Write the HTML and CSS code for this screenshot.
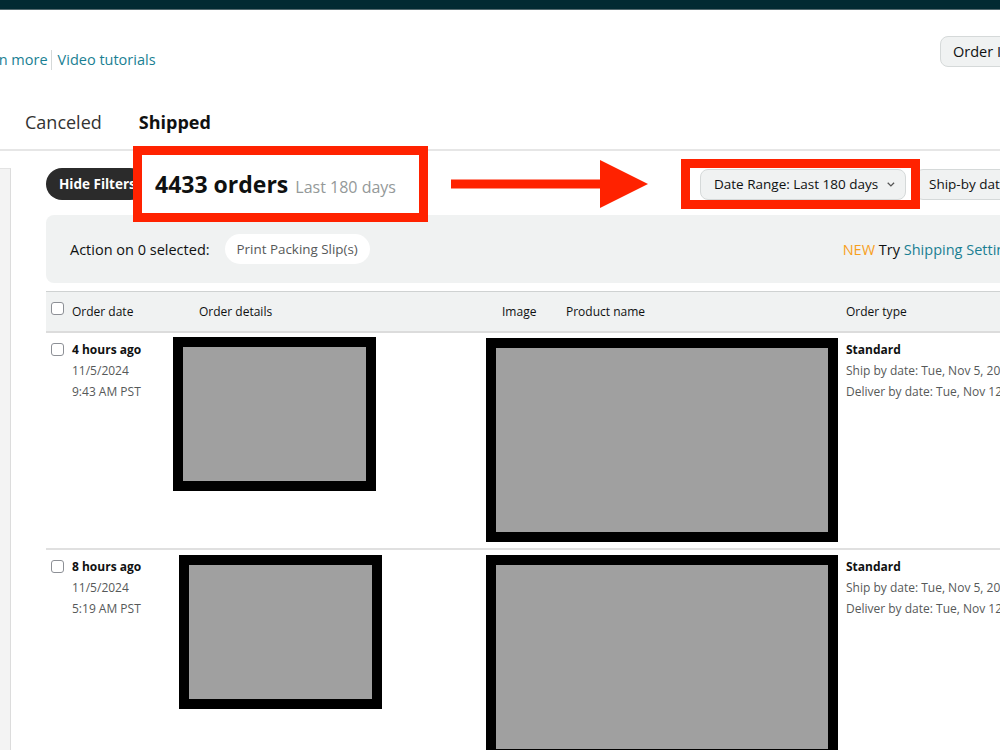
FILE: index.html
```html
<!DOCTYPE html>
<html>

	<head>
		<meta charset="UTF-8">
		<title>Manage Orders - Shipped</title>
		<link rel="stylesheet" href="styles.css">
	</head>

	<body>
		<div class="topbar"></div>

		<div class="subhead">
			<div class="links">
				<a class="link">Learn more</a>
				<a class="link sep">Video tutorials</a>
			</div>
			<div class="search-type">Order ID</div>
		</div>

		<div class="tabs">
			<div class="tab">Canceled</div>
			<div class="tab active">Shipped</div>
		</div>

		<div class="main">
			<div class="sidebar"></div>
			<div class="content">

				<div class="toolbar">
					<div class="pill-dark">Hide Filters</div>
					<div class="mark count">
						<p><b>4433 orders</b><span class="range">Last 180 days</span></p>
					</div>
					<svg class="arrow" width="197" height="48" viewBox="0 0 197 48">
						<rect x="0" y="19.5" width="150" height="9" fill="#ff2200"/>
						<polygon points="149,0 197,24 149,48" fill="#ff2200"/>
					</svg>
					<div class="mark dates">
						<div class="drop date-drop">Date Range: Last 180 days
							<svg width="11" height="7" viewBox="0 0 11 7"><polyline points="1,1 5.5,5.5 10,1" fill="none" stroke="#555" stroke-width="1.8"/></svg>
						</div>
					</div>
					<div class="drop shipby">Ship-by date
						<svg width="11" height="7" viewBox="0 0 11 7"><polyline points="1,1 5.5,5.5 10,1" fill="none" stroke="#555" stroke-width="1.8"/></svg>
					</div>
				</div>

				<div class="actions">
					<span>Action on 0 selected:</span>
					<div class="slip">Print Packing Slip(s)</div>
					<div class="promo"><span class="new">NEW</span> Try <a class="link">Shipping Settings</a></div>
				</div>

				<div class="table">
					<div class="grid thead">
						<div class="when"><span class="cb"></span>Order date</div>
						<div>Order details</div>
						<div>Image</div>
						<div>Product name</div>
						<div>Order type</div>
					</div>

					<div class="grid trow">
						<div class="when">
							<span class="cb"></span>
							<div class="cell-text">
								<b>4 hours ago</b>
								<div class="muted">11/5/2024</div>
								<div class="muted">9:43 AM PST</div>
							</div>
						</div>
						<div class="redact redact-sm first"></div>
						<div class="redact redact-lg"></div>
						<div class="cell-text type">
							<b>Standard</b>
							<div class="muted">Ship by date: Tue, Nov 5, 2024</div>
							<div class="muted">Deliver by date: Tue, Nov 12, 2024</div>
						</div>
					</div>

					<div class="grid trow">
						<div class="when">
							<span class="cb"></span>
							<div class="cell-text">
								<b>8 hours ago</b>
								<div class="muted">11/5/2024</div>
								<div class="muted">5:19 AM PST</div>
							</div>
						</div>
						<div class="redact redact-sm second"></div>
						<div class="redact redact-lg"></div>
						<div class="cell-text type">
							<b>Standard</b>
							<div class="muted">Ship by date: Tue, Nov 5, 2024</div>
							<div class="muted">Deliver by date: Tue, Nov 12, 2024</div>
						</div>
					</div>
				</div>

			</div>
		</div>
	</body>

</html>
```

FILE: styles.css
```css
* {
	margin: 0;
	padding: 0;
	box-sizing: border-box;
}

html,
body {
	overflow: hidden;
}

body {
	width: 1000px;
	height: 750px;
	font-family: "Open Sans", "Noto Sans", "Liberation Sans", sans-serif;
	color: #0f1111;
	background-color: #fff;
}

.topbar {
	height: 10px;
	background-color: #032a32;
	border-bottom: 1px solid #55696e;
}

/* links + search type */
.subhead {
	display: flex;
	align-items: flex-start;
	width: 1050px;
	padding-top: 26px;
}

.links {
	display: flex;
	margin-top: 14px;
	margin-left: -31px;
	font-size: 14.5px;
	line-height: 20px;
}

.link {
	color: #1a7f93;
	text-decoration: none;
}

.link.sep {
	margin-left: 3px;
	padding-left: 6px;
	border-left: 1px solid #d5d9d9;
}

.search-type {
	margin-left: auto;
	width: 110px;
	height: 31px;
	padding-left: 12px;
	display: flex;
	align-items: center;
	font-size: 14.5px;
	background-color: #f0f2f2;
	border: 1px solid #d5d9d9;
	border-radius: 8px;
}

/* tabs */
.tabs {
	display: flex;
	gap: 37px;
	margin-top: 40px;
	padding: 0 0 15px 25px;
	border-bottom: 2px solid #e6e6e6;
	font-size: 18px;
	line-height: 24px;
}

.tab {
	color: #333;
}

.tab.active {
	font-weight: 700;
	color: #0f1111;
}

/* main */
.main {
	display: flex;
	padding-top: 17px;
}

.sidebar {
	width: 11px;
	height: 600px;
	flex-shrink: 0;
	background-color: #f3f3f3;
	border-top: 1px solid #e3e3e3;
	border-right: 1px solid #dcdcdc;
}

.content {
	width: 1000px;
	flex-shrink: 0;
	margin-left: 35px;
}

.toolbar {
	display: flex;
	align-items: center;
	height: 32px;
}

.pill-dark {
	width: 100px;
	height: 32px;
	flex-shrink: 0;
	display: flex;
	align-items: center;
	padding-left: 13px;
	white-space: nowrap;
	overflow: hidden;
	border-radius: 16px;
	background-color: #2b2b2b;
	color: #fff;
	font-weight: 700;
	font-size: 13.5px;
}

/* red annotation boxes */
.mark {
	position: relative;
	z-index: 1;
	flex-shrink: 0;
	border: 9px solid #ff2200;
	background-color: #fff;
	display: flex;
	align-items: center;
}

.count {
	width: 295px;
	height: 76px;
	margin: -22px 0 -22px -13px;
	padding-left: 13px;
	white-space: nowrap;
}

.count b {
	font-size: 23px;
	font-weight: 700;
}

.range {
	margin-left: 7px;
	font-size: 16px;
	color: #949999;
}

.arrow {
	flex-shrink: 0;
	margin: -8px 0 -8px 23px;
}

.dates {
	width: 239px;
	height: 50px;
	margin: -9px 0 -9px 33px;
	padding-left: 10px;
}

.drop {
	height: 31px;
	display: flex;
	align-items: center;
	gap: 9px;
	padding: 0 10px 0 13px;
	white-space: nowrap;
	font-size: 13.5px;
	background-color: #f0f2f2;
	border: 1px solid #d5d9d9;
	border-radius: 8px;
}

.date-drop {
	width: 206px;
}

.shipby {
	flex-shrink: 0;
	margin-left: -5px;
}

/* action bar */
.actions {
	display: flex;
	align-items: center;
	height: 68px;
	margin-top: 15px;
	padding: 0 24px;
	border-radius: 8px;
	background-color: #f0f2f2;
	font-size: 14.5px;
	white-space: nowrap;
}

.slip {
	height: 30px;
	margin-left: 15px;
	padding: 0 12px;
	display: flex;
	align-items: center;
	border-radius: 15px;
	background-color: #fff;
	color: #565959;
	font-size: 13.4px;
}

.promo {
	margin-left: auto;
	margin-right: 2px;
}

.new {
	color: #f7a01d;
}

/* table */
.table {
	margin-top: 8px;
}

.grid {
	display: grid;
	grid-template-columns: 153px 303px 64px 280px 1fr;
}

.thead {
	height: 42px;
	align-items: center;
	font-size: 12px;
	background-color: #f0f2f2;
	border-top: 1px solid #cfd2d2;
	border-bottom: 2px solid #dcdcdc;
}

.thead .cb {
	margin-bottom: 6px;
}

.when {
	display: flex;
	align-items: flex-start;
	gap: 8px;
	padding-left: 5px;
}

.thead .when {
	align-items: center;
}

.cb {
	width: 13px;
	height: 13px;
	flex-shrink: 0;
	border: 1px solid #8d9096;
	border-radius: 3px;
	background-color: #fff;
}

.trow {
	align-items: start;
	padding: 5px 0 6px;
	border-bottom: 2px solid #e0e0e0;
	font-size: 12px;
	line-height: 21px;
}

.trow .cb {
	margin-top: 5px;
}

.cell-text {
	padding-top: 1px;
	white-space: nowrap;
}

.cell-text b {
	font-weight: 700;
}

.muted {
	color: #565959;
}

.redact {
	border: 10px solid #000;
	background-color: #a0a0a0;
}

.redact-sm {
	width: 203px;
	height: 154px;
}

.redact-sm.first {
	margin: -1px 0 0 -26px;
}

.redact-sm.second {
	margin-left: -20px;
}

.redact-lg {
	grid-column: 3 / 5;
	width: 352px;
	height: 204px;
	margin-left: -16px;
}
```
